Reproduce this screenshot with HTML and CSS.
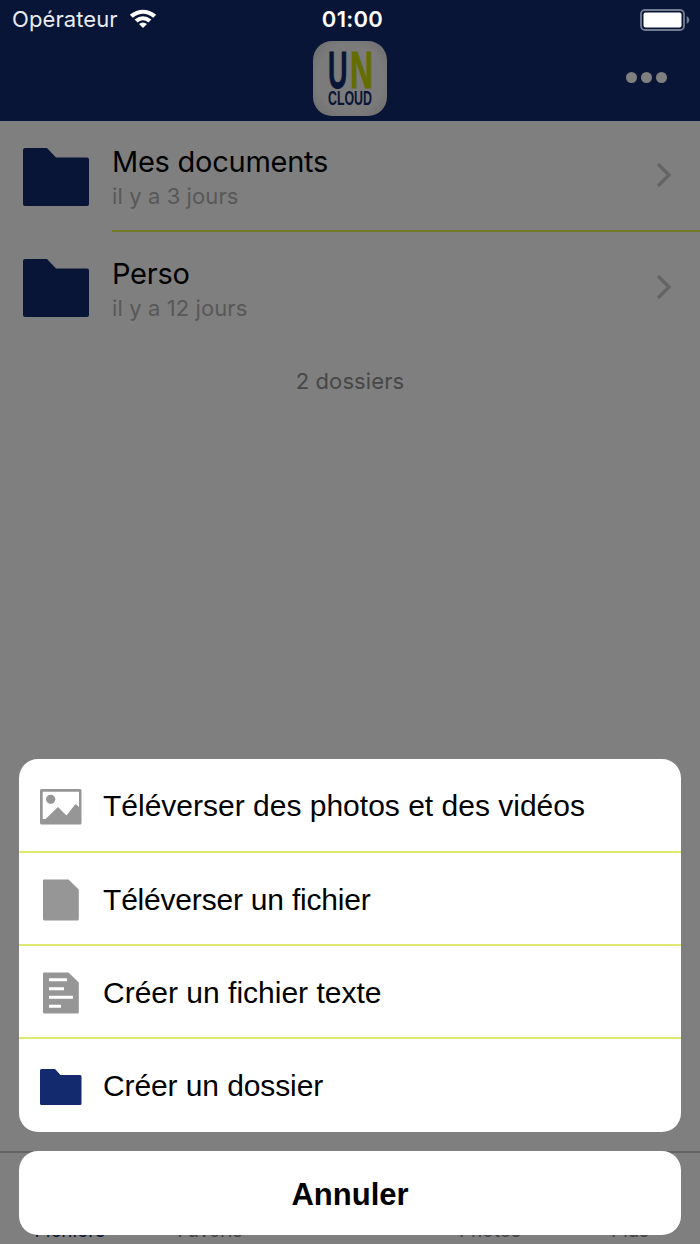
FILE: index.html
```html
<!DOCTYPE html>
<html lang="fr">
<head>
  <meta charset="UTF-8" />
  <meta name="viewport" content="width=device-width, initial-scale=1.0" />
  <title>UN Cloud</title>
  <link rel="stylesheet" href="styles.css">
</head>
<body>
  <div class="status-bar">
    <div class="carrier">
      <span class="carrier-name">Opérateur</span>
      <svg class="wifi" width="28" height="20" viewBox="0 0 28 20">
        <path d="M.8 5.8Q14 -4.4 27.2 5.8L24.2 8.8Q14 .8 3.8 8.8Z" fill="#fff"/>
        <path d="M5.6 10.6Q14 3.8 22.4 10.6L19.4 13.4Q14 9.2 8.6 13.4Z" fill="#fff"/>
        <path d="M10 15Q14 11.8 18 15L14 19Z" fill="#fff"/>
      </svg>
    </div>
    <span class="clock">01:00</span>
    <svg class="battery" width="50" height="22" viewBox="0 0 50 22">
      <rect x="1" y="1" width="43" height="20" rx="4" fill="none" stroke="#737b91" stroke-width="1.8"/>
      <rect x="3.5" y="3.5" width="38" height="15" rx="2" fill="#fff"/>
      <path d="M46.7 7Q49.4 8.5 49.4 11T46.7 15Z" fill="#737b91"/>
    </svg>
  </div>

  <header>
    <svg class="logo" width="74" height="75" viewBox="0 0 74 75">
      <defs>
        <radialGradient id="tile" cx="50%" cy="50%" r="70%">
          <stop offset="65%" stop-color="#f6f6f6"/>
          <stop offset="100%" stop-color="#d8d8d8"/>
        </radialGradient>
      </defs>
      <rect width="74" height="75" rx="19" fill="url(#tile)"/>
      <text class="logo-big" x="15" y="46.5" textLength="19.5" lengthAdjust="spacingAndGlyphs" fill="#102a6c" stroke="#102a6c">U</text>
      <text class="logo-big" x="37" y="46.5" textLength="23" lengthAdjust="spacingAndGlyphs" fill="#c8da00" stroke="#c8da00">N</text>
      <text class="logo-small" x="15" y="64" textLength="44" lengthAdjust="spacingAndGlyphs" fill="#102a6c">CLOUD</text>
    </svg>
    <div class="more"><i></i><i></i><i></i></div>
  </header>

  <main>
    <div class="folder-row">
      <svg class="folder" viewBox="0 0 66 58"><path d="M2 0H24L33 9.5H64Q66 9.5 66 11.5V56Q66 58 64 58H2Q0 58 0 56V2Q0 0 2 0Z"/></svg>
      <div class="folder-info">
        <div>
          <div class="folder-name">Mes documents</div>
          <div class="folder-date">il y a 3 jours</div>
        </div>
        <svg class="chevron" width="16" height="26" viewBox="0 0 16 26"><path d="M2 2L13 13L2 24"/></svg>
      </div>
    </div>
    <div class="folder-row">
      <svg class="folder" viewBox="0 0 66 58"><path d="M2 0H24L33 9.5H64Q66 9.5 66 11.5V56Q66 58 64 58H2Q0 58 0 56V2Q0 0 2 0Z"/></svg>
      <div class="folder-info">
        <div>
          <div class="folder-name">Perso</div>
          <div class="folder-date">il y a 12 jours</div>
        </div>
        <svg class="chevron" width="16" height="26" viewBox="0 0 16 26"><path d="M2 2L13 13L2 24"/></svg>
      </div>
    </div>
    <p class="total">2 dossiers</p>
  </main>

  <nav>
    <a class="active">Fichiers</a>
    <a>Favoris</a>
    <a></a>
    <a>Photos</a>
    <a>Plus</a>
  </nav>

  <div class="overlay">
    <div class="sheet">
      <div class="action">
        <svg width="42" height="36" viewBox="0 0 42 36">
          <path fill="#969696" fill-rule="evenodd" d="M1.5 0H40Q41.5 0 41.5 1.5V34Q41.5 35.5 40 35.5H1.5Q0 35.5 0 34V1.5Q0 0 1.5 0ZM2.7 2.7V30H5.5L18 18L26.5 26.5L35.5 15L39 18V2.7Z"/>
          <circle cx="10.7" cy="10.3" r="4.6" fill="#969696"/>
        </svg>
        <span>Téléverser des photos et des vidéos</span>
      </div>
      <div class="action">
        <svg width="42" height="42" viewBox="0 0 42 42"><path fill="#969696" d="M4 .5H28.5L38.8 10.5V40Q38.8 41.5 37.3 41.5H4.5Q3 41.5 3 40V1.5Q3 .5 4 .5Z"/></svg>
        <span class="label-upload">Téléverser un fichier</span>
      </div>
      <div class="action">
        <svg width="42" height="42" viewBox="0 0 42 42">
          <path fill="#969696" d="M4 .5H28.5L38.8 10.5V40Q38.8 41.5 37.3 41.5H4.5Q3 41.5 3 40V1.5Q3 .5 4 .5Z"/>
          <path d="M9 7.8H27M9 16.8H24M9 25.2H33M9 34.2H21" stroke="#fff" stroke-width="3"/>
        </svg>
        <span>Créer un fichier texte</span>
      </div>
      <div class="action">
        <svg width="42" height="36" viewBox="0 0 42 36"><path fill="#142a6e" d="M1.5 0H15L20.5 6H40Q41.5 6 41.5 7.5V34.5Q41.5 36 40 36H1.5Q0 36 0 34.5V1.5Q0 0 1.5 0Z"/></svg>
        <span class="label-folder">Créer un dossier</span>
      </div>
    </div>
    <div class="cancel">Annuler</div>
  </div>
</body>
</html>
```

FILE: styles.css
```css
:root {
  --navy: #102a6c;
  --lime: #dfe870;
}

* {
  box-sizing: border-box;
}

body {
  margin: 0;
  position: relative;
  height: 1244px;
  display: flex;
  flex-direction: column;
  overflow: hidden;
  background: #fff;
  font-family: Inter, "Liberation Sans", sans-serif;
}

svg {
  display: block;
  flex: none;
}

/* stays bright above the dimmed page */
.status-bar {
  position: absolute;
  z-index: 2;
  top: 0;
  left: 0;
  width: 100%;
  height: 39px;
  padding: 0 10px 0 12px;
  display: grid;
  grid-template-columns: 1fr auto 1fr;
  align-items: center;
  color: #fff;
  font-size: 22px;
}

.carrier {
  display: flex;
  align-items: center;
  gap: 11px;
  margin-top: -1px;
}

.carrier-name {
  color: #e9ebf0;
  letter-spacing: 0.1px;
}

.clock {
  margin-top: -1px;
  padding-left: 3px;
  font-weight: 600;
  letter-spacing: 0.3px;
}

.battery {
  justify-self: end;
}

header {
  height: 121px;
  padding: 41px 33px 0;
  display: grid;
  grid-template-columns: 1fr auto 1fr;
  align-items: start;
  background: var(--navy);
}

.logo {
  grid-column: 2;
}

.logo-big {
  font: bold 51px "Liberation Sans", sans-serif;
  stroke-width: 0.8px;
}

.logo-small {
  font: bold 20px "Liberation Sans", sans-serif;
}

.more {
  justify-self: end;
  display: flex;
  gap: 4px;
  margin-top: 31px;
}

.more i {
  width: 11px;
  height: 11px;
  border-radius: 50%;
  background: #fff;
}

main {
  flex: 1;
}

.folder-row {
  display: flex;
  align-items: center;
  height: 112px;
  padding-left: 23px;
}

.folder-row:first-child {
  height: 111px;
}

.folder {
  width: 66px;
  height: 58px;
  fill: var(--navy);
}

.folder-info {
  flex: 1;
  height: 100%;
  margin-left: 23px;
  padding: 3px 28px 0 0;
  display: flex;
  align-items: center;
  justify-content: space-between;
}

.folder-row:first-child .folder-info {
  padding-top: 4px;
  border-bottom: 2px solid #e2f254;
}

.folder-name {
  font-size: 29px;
  line-height: 36px;
  letter-spacing: -0.25px;
  color: #000;
}

.folder-date {
  font-size: 22px;
  line-height: 32px;
  letter-spacing: 0.1px;
  color: #b0b0b0;
}

.chevron {
  margin-bottom: 5px;
  fill: none;
  stroke: #c8c8cc;
  stroke-width: 3.4;
}

.total {
  margin: 23px 0 0;
  text-align: center;
  font-size: 22px;
  line-height: 28px;
  letter-spacing: 0.1px;
  color: #8f8f8f;
}

nav {
  height: 93px;
  display: flex;
  align-items: flex-end;
  border-top: 2px solid #c8c8c8;
}

nav a {
  flex: 1;
  padding-bottom: 1px;
  text-align: center;
  font-size: 19px;
  line-height: 24px;
  color: #858585;
}

nav .active {
  color: var(--navy);
}

.overlay {
  position: absolute;
  inset: 0;
  padding: 0 19px 9.5px;
  display: flex;
  flex-direction: column;
  justify-content: flex-end;
  gap: 18.5px;
  background: rgba(0, 0, 0, 0.5);
  font-family: "Liberation Sans", Arial, sans-serif;
}

.sheet,
.cancel {
  border-radius: 19px;
  background: #fff;
  color: #000;
}

.action {
  display: flex;
  align-items: center;
  gap: 21px;
  height: 93px;
  padding: 3px 21px 0;
  font-size: 30px;
}

.action:first-child {
  height: 92px;
}

.action:last-child {
  height: 95px;
}

.action + .action {
  border-top: 2px solid var(--lime);
}

.action span {
  margin-top: -1px;
}

.action:last-child span {
  margin-top: -3px;
}

.label-upload {
  letter-spacing: -0.2px;
}

.label-folder {
  letter-spacing: -0.1px;
}

.cancel {
  height: 84px;
  padding-top: 2px;
  text-align: center;
  font-size: 31px;
  font-weight: bold;
  line-height: 84px;
}
```
